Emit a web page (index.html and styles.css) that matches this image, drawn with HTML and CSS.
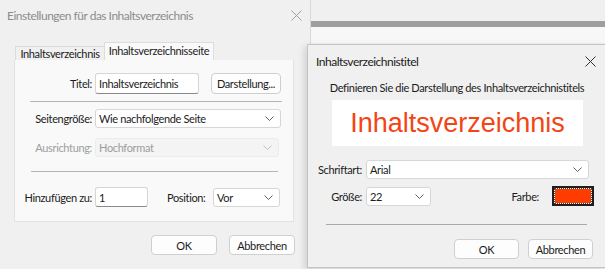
FILE: index.html
```html
<!DOCTYPE html>
<html lang="de">
<head>
    <meta charset="UTF-8">
    <title>Inhaltsverzeichnis</title>
    <link rel="stylesheet" href="styles.css">
</head>
<body>
<div class="desktop">

    <!-- Hauptdialog (inaktiv) -->
    <section class="dialog settings">
        <header class="titlebar inactive">
            <span>Einstellungen für das Inhaltsverzeichnis</span>
            <svg class="close" width="11" height="11" viewBox="0 0 11 11"><path d="M0.5 0.5L10.5 10.5M10.5 0.5L0.5 10.5"/></svg>
        </header>

        <div class="tabs">
            <div class="tab">Inhaltsverzeichnis</div>
            <div class="tab active">Inhaltsverzeichnisseite</div>
        </div>

        <div class="panel">
            <div class="row r-title">
                <span class="lbl">Titel:</span>
                <div class="field w-title">Inhaltsverzeichnis</div>
                <div class="btn w-style">Darstellung...</div>
            </div>
            <hr class="sep s1">
            <div class="row r-size">
                <span class="lbl">Seitengröße:</span>
                <div class="select w-page">Wie nachfolgende Seite
                    <svg class="chev" width="9" height="5" viewBox="0 0 9 5"><path d="M0.5 0.5L4.5 4.5L8.5 0.5"/></svg>
                </div>
            </div>
            <div class="row r-orient disabled">
                <span class="lbl">Ausrichtung:</span>
                <div class="select w-orient">Hochformat
                    <svg class="chev" width="9" height="5" viewBox="0 0 9 5"><path d="M0.5 0.5L4.5 4.5L8.5 0.5"/></svg>
                </div>
            </div>
            <hr class="sep s2">
            <div class="row r-add">
                <span class="lbl">Hinzufügen zu:</span>
                <div class="field w-num">1</div>
                <span class="lbl-pos">Position:</span>
                <div class="select w-pos">Vor
                    <svg class="chev" width="9" height="5" viewBox="0 0 9 5"><path d="M0.5 0.5L4.5 4.5L8.5 0.5"/></svg>
                </div>
            </div>
        </div>

        <div class="actions a-left">
            <div class="btn">OK</div>
            <div class="btn">Abbrechen</div>
        </div>
    </section>

    <div class="backdrop">
        <div class="strip"></div>
    </div>

    <!-- Unterdialog (aktiv) -->
    <section class="dialog heading">
        <header class="titlebar">
            <span>Inhaltsverzeichnistitel</span>
            <svg class="close" width="11" height="11" viewBox="0 0 11 11"><path d="M0.5 0.5L10.5 10.5M10.5 0.5L0.5 10.5"/></svg>
        </header>

        <p class="hint">Definieren Sie die Darstellung des Inhaltsverzeichnistitels</p>
        <div class="preview">Inhaltsverzeichnis</div>

        <div class="row r-font">
            <span class="lbl2">Schriftart:</span>
            <div class="select w-font">Arial
                <svg class="chev" width="9" height="5" viewBox="0 0 9 5"><path d="M0.5 0.5L4.5 4.5L8.5 0.5"/></svg>
            </div>
        </div>
        <div class="row r-fsize">
            <span class="lbl2">Größe:</span>
            <div class="select w-fsize">22
                <svg class="chev" width="9" height="5" viewBox="0 0 9 5"><path d="M0.5 0.5L4.5 4.5L8.5 0.5"/></svg>
            </div>
            <span class="lbl-color">Farbe:</span>
            <div class="swatch"><div class="swatch-fill"></div></div>
        </div>
        <hr class="sep s3">
        <div class="actions a-right">
            <div class="btn">OK</div>
            <div class="btn">Abbrechen</div>
        </div>
    </section>

</div>
</body>
</html>
```

FILE: styles.css
```css
* {
    box-sizing: border-box;
}

body {
    margin: 0;
    font-family: Lato, 'Noto Sans', sans-serif;
    font-size: 11px;
    letter-spacing: -0.35px;
    color: #1b1b1b;
    background-color: #f0f0f0;
    overflow: hidden;
}

.desktop {
    position: relative;
    display: flex;
    width: 605px;
    height: 269px;
    overflow: hidden;
}

/* --- Fenster allgemein --- */

.dialog {
    background-color: #f0f0f0;
}

.titlebar {
    display: flex;
    align-items: center;
    justify-content: space-between;
    height: 30px;
    padding-left: 7px;
    padding-right: 8px;
    font-size: 12px;
    letter-spacing: -0.5px;
    white-space: nowrap;
}

.titlebar.inactive {
    color: #8c8c8c;
}

.close path {
    stroke: #303030;
    stroke-width: 1;
    fill: none;
}

.inactive .close path {
    stroke: #a0a0a0;
}

.row {
    display: flex;
    align-items: center;
}

.sep {
    border: none;
    border-top: 1px solid #a9a9a9;
    margin: 0;
    height: 0;
}

.field,
.select,
.btn {
    display: flex;
    align-items: center;
    background-color: #fff;
    border: 1px solid #d6d6d6;
    border-radius: 3px;
    white-space: nowrap;
}

.field {
    padding-left: 3px;
    border-bottom-color: #8a8a8a;
}

.select {
    position: relative;
    padding-left: 3px;
    height: 19px;
}

.chev {
    position: absolute;
    right: 6px;
    top: 6px;
}

.chev path {
    stroke: #606060;
    stroke-width: 1;
    fill: none;
}

.btn {
    justify-content: center;
    height: 20px;
    background-color: #fdfdfd;
    border-color: #cfcfcf;
    border-radius: 4px;
}

.actions {
    display: flex;
    justify-content: flex-end;
}

.actions .btn {
    width: 66px;
}

/* labels stehen rechtsbündig vor dem Feld */
.lbl,
.lbl2 {
    display: flex;
    justify-content: flex-end;
    flex: none;
    white-space: nowrap;
}

/* --- Linker Dialog --- */

.settings {
    flex: none;
    width: 311px;
    height: 269px;
    border-right: 1px solid #d8d8d8;
}

.tabs {
    display: flex;
    align-items: flex-end;
    height: 20px;
    margin-top: 10px;
    padding-left: 15px;
    white-space: nowrap;
}

.tab {
    display: flex;
    align-items: center;
    justify-content: center;
    width: 89px;
    height: 14px;
    border: 1px solid #dcdcdc;
    border-bottom: none;
    border-right: none;
}

.tab.active {
    width: 110px;
    height: 18px;
    padding-bottom: 2px;
    background-color: #f9f9f9;
    border-right: 1px solid #dcdcdc;
}

.panel {
    width: 280px;
    height: 162px;
    margin-left: 14px;
    padding: 13px 0 0 8px;
    background-color: #f9f9f9;
    border: 1px solid #e2e2e2;
    border-top: none;
}

.lbl {
    width: 69px;
    margin-right: 3px;
}

.r-title .field {
    height: 21px;
}

.w-title {
    width: 104px;
}

.w-style {
    width: 70px;
    height: 21px;
    margin-left: 12px;
}

.s1 {
    width: 252px;
    margin: 7px 0 7px 7px;
    border-top-color: #b4b4b4;
}

.w-page {
    width: 186px;
}

.r-orient {
    margin-top: 10px;
}

.disabled {
    color: #9d9d9d;
}

.disabled .select {
    background-color: #f4f4f4;
    border-color: #ececec;
    width: 184px;
}

.disabled .chev path {
    stroke: #c0c0c0;
}

.s2 {
    width: 247px;
    margin: 14px 0 15px 8px;
    border-top-color: #b4b4b4;
}

.r-add .field {
    height: 20px;
}

.w-num {
    width: 53px;
}

.lbl-pos {
    margin-left: 19px;
    width: 46px;
}

.w-pos {
    width: 67px;
}

.a-left {
    gap: 12px;
    margin-top: 13px;
    padding-right: 15px;
}

/* --- Leiste hinter den Dialogen --- */

.backdrop {
    flex: 1;
    padding-top: 21px;
}

.strip {
    height: 6px;
    background-color: #9e9e9e;
    border-bottom: 16px solid #f7f7f7;
    box-sizing: content-box;
}

/* --- Rechter Dialog --- */

.heading {
    position: absolute;
    left: 307px;
    top: 44px;
    width: 300px;
    height: 224px;
    border: 1px solid #c4c4c4;
    box-shadow: -3px 2px 6px rgba(0, 0, 0, 0.12);
}

.heading .titlebar {
    height: 33px;
    padding-left: 8px;
    padding-right: 10px;
}

.hint {
    margin: 2px 0 0;
    text-align: center;
    line-height: 16px;
    white-space: nowrap;
}

.preview {
    width: 251px;
    height: 46px;
    margin: 4px 0 0 24px;
    background-color: #fff;
    color: #f24516;
    font-family: 'Liberation Sans', Arial, sans-serif;
    font-size: 27px;
    letter-spacing: 0;
    line-height: 46px;
    text-align: center;
}

.lbl2 {
    width: 46px;
    margin-left: 8px;
    margin-right: 4px;
}

.r-font {
    margin-top: 14px;
}

.w-font {
    width: 223px;
}

.r-fsize {
    margin-top: 7px;
    padding-right: 12px;
}

.w-fsize {
    width: 65px;
}

.lbl-color {
    margin-left: auto;
}

.swatch {
    width: 42px;
    height: 20px;
    margin-left: 13px;
    border: 2px solid #1e1e1e;
    padding: 1px;
    background-color: #fff;
}

.swatch-fill {
    height: 100%;
    background-color: #fe3c00;
    outline: 1px dotted #444;
}

.s3 {
    width: 261px;
    margin: 18px 0 0 18px;
}

.a-right {
    gap: 9px;
    margin-top: 14px;
    padding-right: 13px;
}

.a-right .btn {
    width: 65px;
}
```
